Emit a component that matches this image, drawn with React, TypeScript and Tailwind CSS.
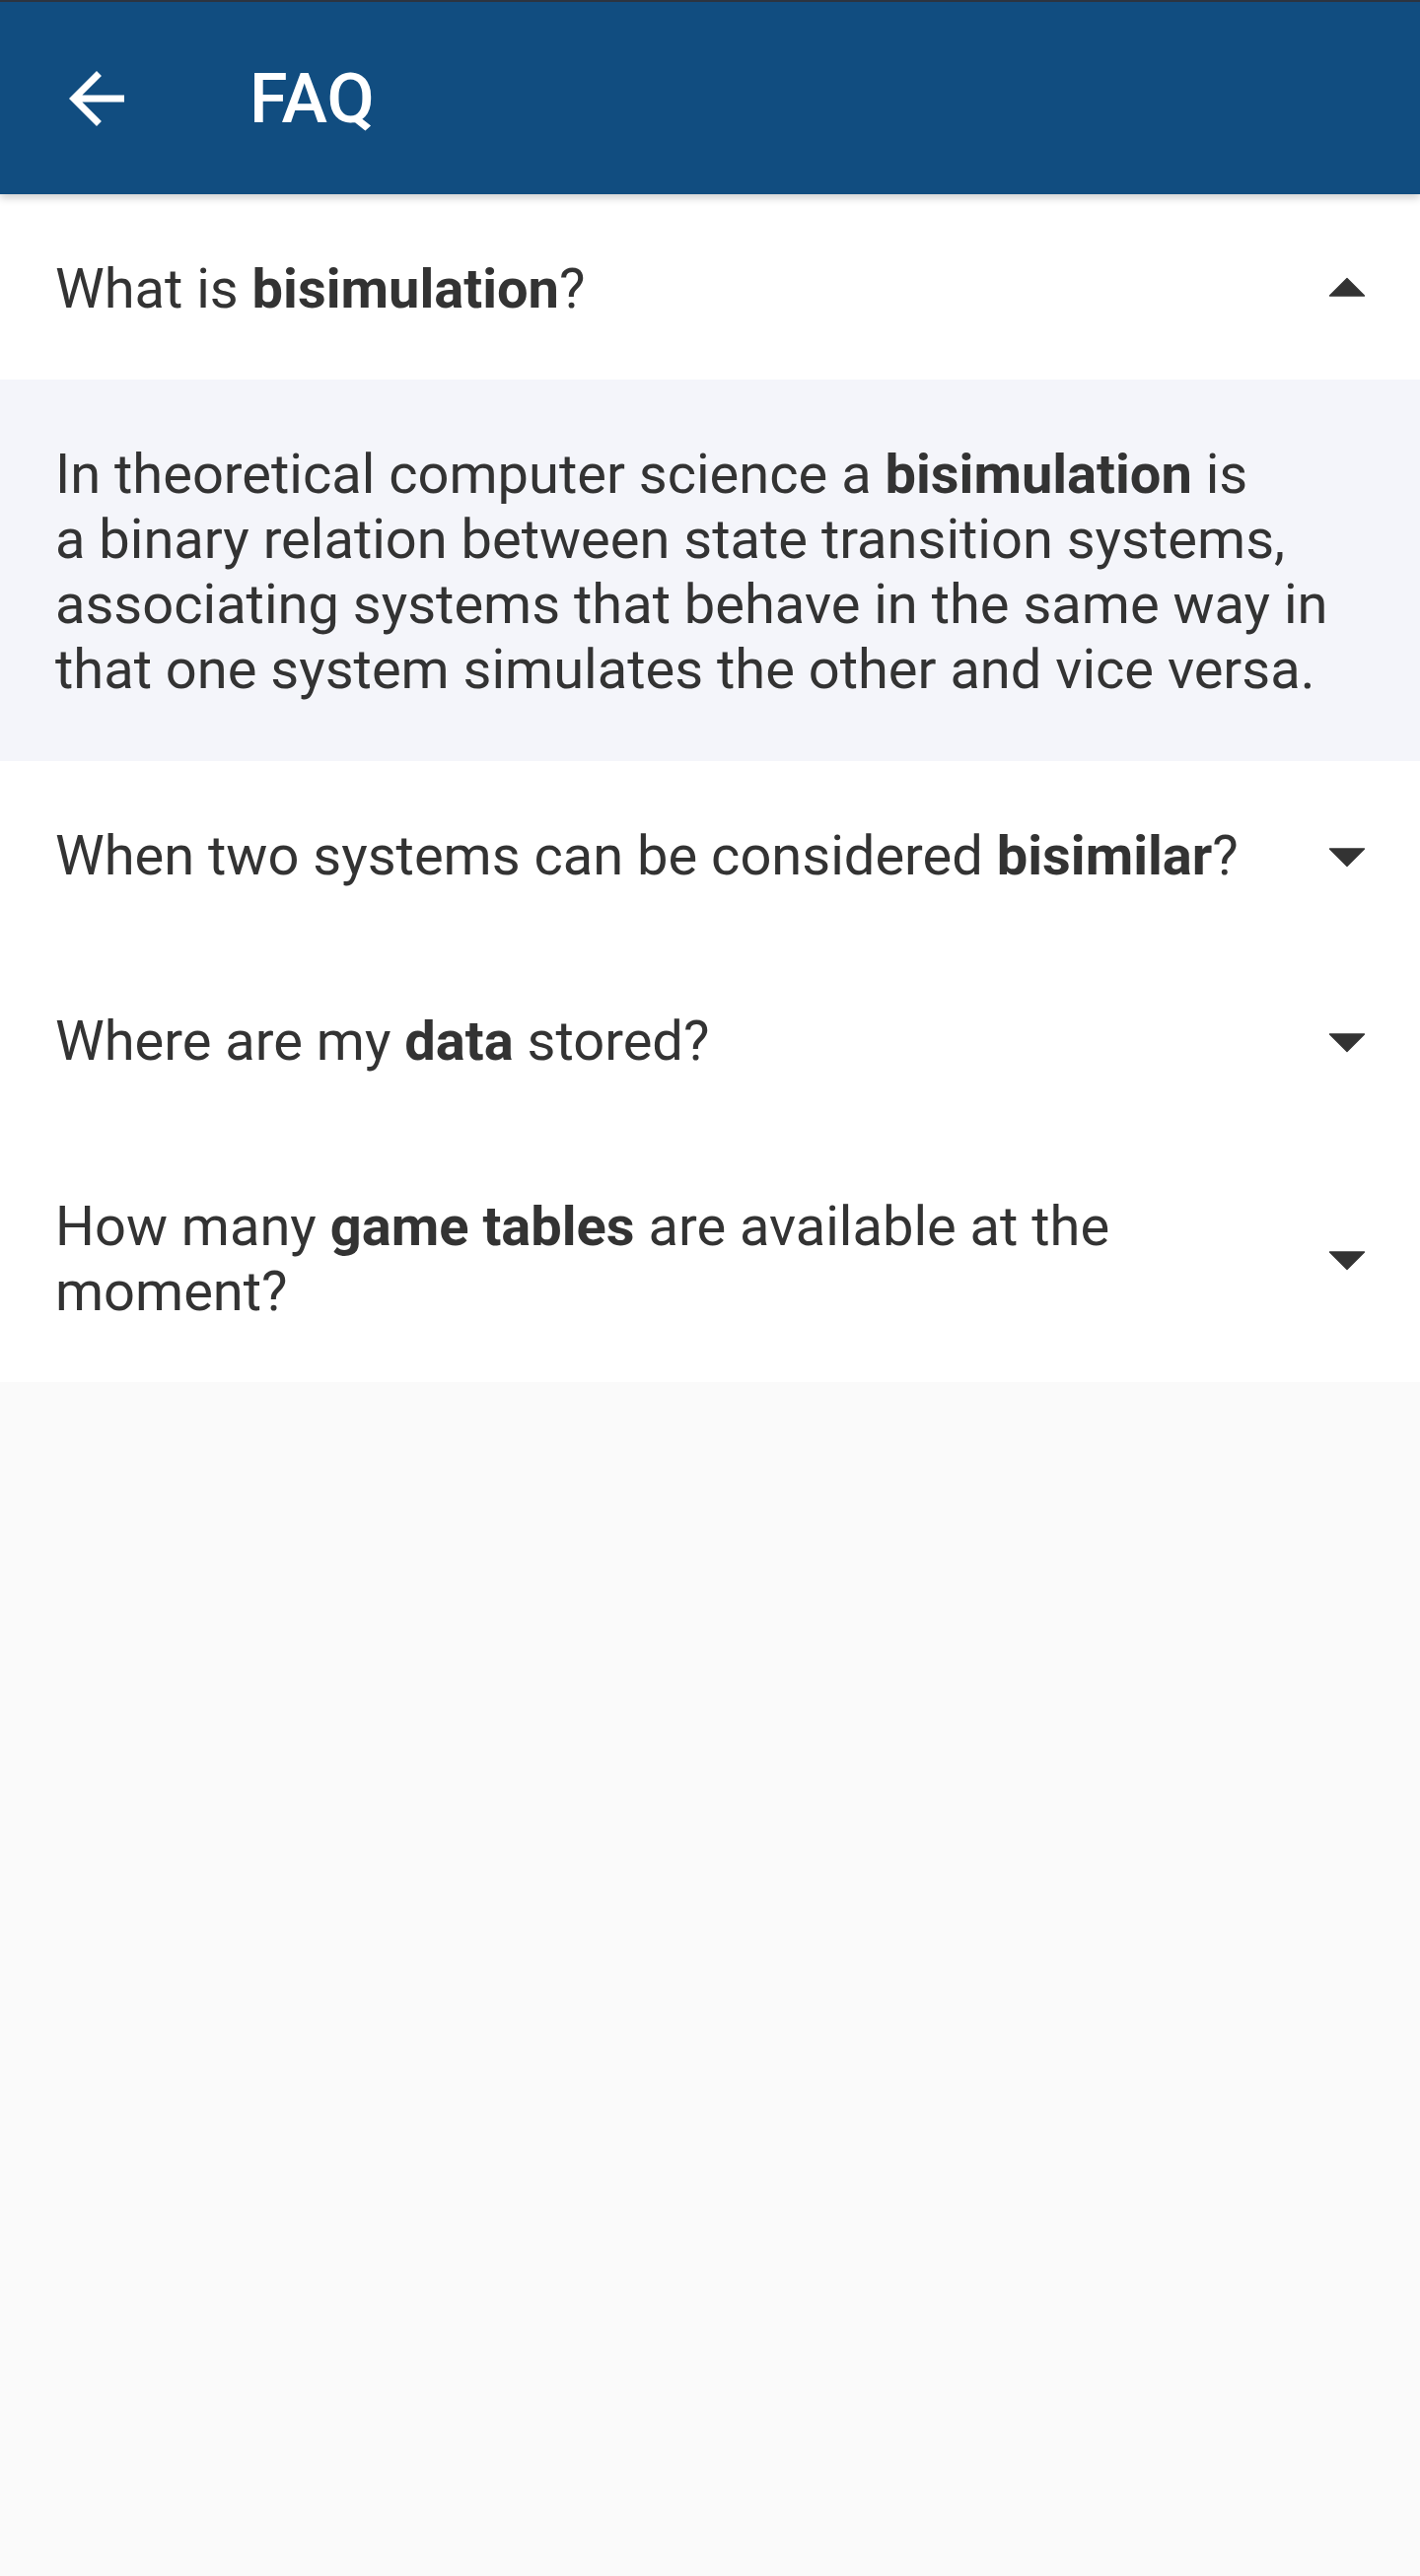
import React from 'react'

interface FaqItem {
  id: string
  question: React.ReactNode
  answer?: React.ReactNode
}

const FAQ_ITEMS: FaqItem[] = [
  {
    id: 'bisimulation',
    question: <>What is <b className="font-bold">bisimulation</b>?</>,
    answer: (
      <>
        In theoretical computer science a <b className="font-bold">bisimulation</b> is<br />
        a binary relation between state transition systems,<br />
        associating systems that behave in the same way in<br />
        that one system simulates the other and vice versa.
      </>
    )
  },
  {
    id: 'bisimilar',
    question: <>When two systems can be considered <b className="font-bold">bisimilar</b>?</>
  },
  {
    id: 'data',
    question: <>Where are my <b className="font-bold">data</b> stored?</>
  },
  {
    id: 'tables',
    question: <>How many <b className="font-bold">game tables</b> are available at the moment?</>
  }
]

function DropIcon({ up }: { up?: boolean }): JSX.Element {
  // 84px glyph box kept inside a 66px slot so it doesn't stretch the row
  return (
    <div className="flex h-[66px] w-[84px] shrink-0 items-center justify-center">
      <svg width="84" height="84" viewBox="0 0 24 24" className="shrink-0" fill="#333333">
        {up ? (
          <path d="M7 14l5-5 5 5z" stroke="#333333" strokeWidth="0.4" strokeLinejoin="round" />
        ) : (
          <path d="M7 10l5 5 5-5z" stroke="#333333" strokeWidth="0.4" strokeLinejoin="round" />
        )}
      </svg>
    </div>
  )
}

export default function App(): JSX.Element {
  const openId = 'bisimulation'

  return (
    <div className="min-h-[2613px] bg-[#fafafa] font-['Roboto','Liberation_Sans',sans-serif] text-[#333333]">
      {/* Toolbar */}
      <header className="relative z-10 flex h-[197px] items-center border-t-2 border-[#2c3440] bg-[#114d80] shadow-[0_4px_8px_rgba(0,0,0,0.18)]">
        <button className="ml-[56px] flex h-[84px] w-[84px] items-center justify-center">
          <svg width="84" height="84" viewBox="0 0 24 24" fill="#ffffff">
            <path d="M20 11H7.83l5.59-5.59L12 4l-8 8 8 8 1.41-1.41L7.83 13H20v-2z" />
          </svg>
        </button>
        <h1 className="ml-[113px] text-[70px] font-medium leading-none text-white">FAQ</h1>
      </header>

      {/* List */}
      <div>
        {FAQ_ITEMS.map((item) => {
          const open = item.id === openId
          return (
            <div key={item.id}>
              <div className="flex items-center bg-white pb-[59px] pl-[56px] pr-[32px] pt-[63px]">
                <div className="min-w-0 flex-1 pr-[8px] text-[56px] leading-[66px]">{item.question}</div>
                <DropIcon up={open} />
              </div>
              {open && item.answer && (
                <div className="whitespace-nowrap bg-[#f4f5fa] pb-[60px] pl-[56px] pr-[40px] pt-[63px] text-[56px] leading-[66px]">
                  {item.answer}
                </div>
              )}
            </div>
          )
        })}
      </div>
    </div>
  )
}
